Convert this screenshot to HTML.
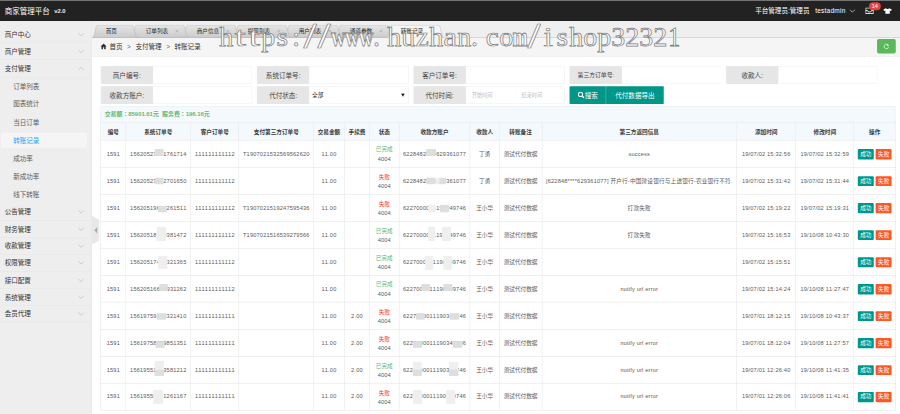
<!DOCTYPE html><html lang="zh-CN"><head><meta charset="utf-8"><title>商家管理平台</title><style>
*{box-sizing:border-box;margin:0;padding:0}
html,body{width:900px;height:414px;overflow:hidden;background:#fff}
body{font-family:"Liberation Sans","Noto Sans CJK SC",sans-serif;color:#333}
#root{position:absolute;left:0;top:0;width:1920px;height:884px;transform:scale(0.46875);transform-origin:0 0;background:#fff;overflow:hidden;font-size:14px}
#hdr{position:absolute;left:0;top:0;width:1920px;height:44.5px;background:#222;border-top:2px solid #7a7a7a}
#hdr .title{position:absolute;left:10px;top:11px;font-size:16px;color:#fff;line-height:22px;white-space:nowrap}
#hdr .ver{position:absolute;left:115.5px;top:13px;font-size:12.5px;font-weight:bold;color:#eee;line-height:18px}
#hdr .user{position:absolute;left:1611px;top:10px;font-size:14px;color:#fff;line-height:22px;white-space:nowrap}
#side{position:absolute;left:0;top:44.5px;width:196px;height:840px;background:#eee;border-right:1px solid #e2e2e2}
#side ul{list-style:none;position:absolute;left:0;top:11.1px;width:195px}
#side li{position:relative;height:36.38px;line-height:37px;padding-left:10px;font-size:14px;color:#333;border-bottom:1px solid #e4e4e4;white-space:nowrap}
#side li.sub{height:38.5px;line-height:39.6px;padding-left:28px;color:#5c5c5c;border-bottom:none}
#side li.sub.on{color:#1E9FFF;background:linear-gradient(#f5f5f5,#f5f5f5) no-repeat 2px 3.2px / 184px 32px}
#side li svg{position:absolute;left:165px;top:13px}
#tabs{position:absolute;left:196px;top:44.5px;width:1724px;height:36.6px;background:#efefef;overflow:hidden}
#crumb{position:absolute;left:196px;top:81.1px;width:1724px;height:39.9px;background:#f5f5f5;border-bottom:1px solid #ececec}
#crumb .t{position:absolute;left:19px;top:7.9px;line-height:22px;font-size:14px;color:#333;white-space:nowrap}
#crumb .t span{margin:0 9.6px;color:#666}
#refresh{position:absolute;left:1871px;top:83px;width:40px;height:31px;background:#5cb85c;border-radius:4px}
.grp{position:absolute;height:38px;width:324px}
.grp .lb{position:absolute;left:0;top:0;width:112.2px;height:38px;background:#e6e6e6;border-radius:2px 0 0 2px;text-align:center;line-height:40px;font-size:14px;color:#444;white-space:nowrap}
.grp .ip{position:absolute;left:112.2px;top:0;width:211.8px;height:38px;border:1px solid #e9e9e9;border-left:none;background:#fff;border-radius:0 2px 2px 0;font-size:12px;line-height:36px;padding-left:10px;color:#333}
.grp .ip.h{width:105.9px;color:#bbb;font-size:11px;padding-left:13px}
.btn{position:absolute;top:183.5px;height:38px;background:#009688;color:#fff;font-size:14px;line-height:38px;text-align:center;white-space:nowrap}
#sum{position:absolute;left:214.3px;top:227.2px;width:1696.1px;height:34.3px;background:#f3f9fd;border:1px solid #e3edf3;border-bottom:none;font-size:12.6px;font-weight:bold;color:#5FB878;line-height:32.5px;padding-left:8px;white-space:nowrap}
table{position:absolute;left:214.3px;top:260.5px;border-collapse:collapse;table-layout:fixed;width:1696.1px;font-size:12px;color:#5a5a5a}
th,td{border:1px solid #e2e2e2;text-align:center;white-space:nowrap;overflow:hidden;padding:0}
th{height:38.5px;background:#f3f9fd;color:#3a3a3a;font-weight:bold;font-size:12px}
td{height:57.58px;line-height:20px}
td.n,.n4{letter-spacing:0.4px;font-kerning:none}
.ok{color:#5FB878}.fail{color:#f33}
.b{display:inline-block;width:34.6px;height:21.4px;line-height:21.4px;position:relative;top:0.6px;color:#fff;font-size:12px;border-radius:2px;vertical-align:middle}
.b1{background:#009688;margin-right:3.5px}.b2{background:#FF5722}
#sum i{font-style:normal;font-family:"Liberation Sans","Noto Sans CJK JP",sans-serif}
.m{position:absolute;background:#dedede}
.w{position:absolute;background:#efefef}
</style></head><body>
<div id="root">
<div id="hdr"><div class="title">商家管理平台</div><div class="ver">v2.0</div>
<div class="user">平台管理员:管理员</div><div class="user" style="left:1739px;letter-spacing:0.45px">testadmin</div>
<svg style="position:absolute;left:1812px;top:16.5px" width="13" height="9" viewBox="0 0 13 9"><path d="M1 1.5 L6.5 7 L12 1.5" fill="none" stroke="#c8c8c8" stroke-width="1.7"/></svg>
<svg style="position:absolute;left:1845.5px;top:14px" width="18" height="14" viewBox="0 0 18 14"><rect x="1" y="1" width="16" height="12" fill="none" stroke="#fff" stroke-width="1.8"/><path d="M1 6.5 L5 6.5 L6.5 9.5 L11.5 9.5 L13 6.5 L17 6.5" fill="none" stroke="#fff" stroke-width="1.8"/></svg>
<div style="position:absolute;left:1854px;top:2.5px;width:24.5px;height:17px;border-radius:8.5px;background:#e5453d;color:#fff;font-size:12px;line-height:17px;text-align:center">14</div>
<svg style="position:absolute;left:1884px;top:14.5px" width="19" height="13" viewBox="0 0 22 15"><path d="M7 0.5 L0.5 3.5 L2.5 7.5 L5.5 6.5 L5.5 14.5 L16.5 14.5 L16.5 6.5 L19.5 7.5 L21.5 3.5 L15 0.5 C14 2.8 8 2.8 7 0.5 Z" fill="#fff"/></svg>
</div>
<div id="side"><ul>
<li>商户中心<svg width="16" height="10" viewBox="0 0 16 10"><path d="M2.5 2 L8 7.5 L13.5 2" fill="none" stroke="#bdbdbd" stroke-width="1.5"/></svg></li>
<li>商户管理<svg width="16" height="10" viewBox="0 0 16 10"><path d="M2.5 2 L8 7.5 L13.5 2" fill="none" stroke="#bdbdbd" stroke-width="1.5"/></svg></li>
<li>支付管理<svg width="16" height="10" viewBox="0 0 16 10"><path d="M2.5 8 L8 2.5 L13.5 8" fill="none" stroke="#bdbdbd" stroke-width="1.5"/></svg></li>
<li class="sub">订单列表</li>
<li class="sub">图表统计</li>
<li class="sub">当日订单</li>
<li class="sub on">转账记录</li>
<li class="sub">成功率</li>
<li class="sub">新成功率</li>
<li class="sub">线下转账</li>
<li>公告管理<svg width="16" height="10" viewBox="0 0 16 10"><path d="M2.5 2 L8 7.5 L13.5 2" fill="none" stroke="#bdbdbd" stroke-width="1.5"/></svg></li>
<li>财务管理<svg width="16" height="10" viewBox="0 0 16 10"><path d="M2.5 2 L8 7.5 L13.5 2" fill="none" stroke="#bdbdbd" stroke-width="1.5"/></svg></li>
<li>收款管理<svg width="16" height="10" viewBox="0 0 16 10"><path d="M2.5 2 L8 7.5 L13.5 2" fill="none" stroke="#bdbdbd" stroke-width="1.5"/></svg></li>
<li>权限管理<svg width="16" height="10" viewBox="0 0 16 10"><path d="M2.5 2 L8 7.5 L13.5 2" fill="none" stroke="#bdbdbd" stroke-width="1.5"/></svg></li>
<li>接口配置<svg width="16" height="10" viewBox="0 0 16 10"><path d="M2.5 2 L8 7.5 L13.5 2" fill="none" stroke="#bdbdbd" stroke-width="1.5"/></svg></li>
<li>系统管理<svg width="16" height="10" viewBox="0 0 16 10"><path d="M2.5 2 L8 7.5 L13.5 2" fill="none" stroke="#bdbdbd" stroke-width="1.5"/></svg></li>
<li>会员代理<svg width="16" height="10" viewBox="0 0 16 10"><path d="M2.5 2 L8 7.5 L13.5 2" fill="none" stroke="#bdbdbd" stroke-width="1.5"/></svg></li>
</ul></div>
<svg style="position:absolute;left:196px;top:460px" width="18" height="62" viewBox="0 0 18 62"><path d="M0 0 L15.5 9 L15.5 53 L0 62 Z" fill="#e6e6e6" fill-opacity="0.92"/><path d="M11.5 24 L5.5 31 L11.5 38 Z" fill="#a8a8a8"/></svg>
<div id="tabs">
<svg style="position:absolute;left:0;top:0" width="1724" height="38" viewBox="0 0 1724 38"><defs><linearGradient id="tg" x1="0" y1="0" x2="0" y2="1"><stop offset="0" stop-color="#e6e6e6"/><stop offset="1" stop-color="#c9c9c9"/></linearGradient></defs><path d="M520.1 36.6 C525.3 36.6 526.4 8.6 531.6 8.6 L630.6 8.6 C635.8 8.6 636.9 36.6 642.1 36.6 Z" fill="url(#tg)" stroke="#b2b2b2" stroke-width="1"/><path d="M531.6 7.5 L630.6 7.5" stroke="#f7f7f7" stroke-width="1.2" fill="none"/><path d="M411.1 36.6 C416.3 36.6 417.4 8.6 422.6 8.6 L521.6 8.6 C526.8 8.6 527.9 36.6 533.1 36.6 Z" fill="url(#tg)" stroke="#b2b2b2" stroke-width="1"/><path d="M422.6 7.5 L521.6 7.5" stroke="#f7f7f7" stroke-width="1.2" fill="none"/><path d="M302.1 36.6 C307.3 36.6 308.4 8.6 313.6 8.6 L412.6 8.6 C417.8 8.6 418.9 36.6 424.1 36.6 Z" fill="url(#tg)" stroke="#b2b2b2" stroke-width="1"/><path d="M313.6 7.5 L412.6 7.5" stroke="#f7f7f7" stroke-width="1.2" fill="none"/><path d="M193.1 36.6 C198.3 36.6 199.4 8.6 204.6 8.6 L303.6 8.6 C308.8 8.6 309.9 36.6 315.1 36.6 Z" fill="url(#tg)" stroke="#b2b2b2" stroke-width="1"/><path d="M204.6 7.5 L303.6 7.5" stroke="#f7f7f7" stroke-width="1.2" fill="none"/><path d="M84.1 36.6 C89.3 36.6 90.4 8.6 95.6 8.6 L194.6 8.6 C199.8 8.6 200.9 36.6 206.1 36.6 Z" fill="url(#tg)" stroke="#b2b2b2" stroke-width="1"/><path d="M95.6 7.5 L194.6 7.5" stroke="#f7f7f7" stroke-width="1.2" fill="none"/><path d="M0.7 36.6 C5.9 36.6 7.0 8.6 12.2 8.6 L85.6 8.6 C90.8 8.6 91.9 36.6 97.1 36.6 Z" fill="url(#tg)" stroke="#b2b2b2" stroke-width="1"/><path d="M12.2 7.5 L85.6 7.5" stroke="#f7f7f7" stroke-width="1.2" fill="none"/><path d="M629.1 36.6 C634.3 36.6 635.4 8.6 640.6 8.6 L739.6 8.6 C744.8 8.6 745.9 36.6 751.1 36.6 Z" fill="#f6f6f6" stroke="#b2b2b2" stroke-width="1"/><path d="M640.6 7.5 L739.6 7.5" stroke="#f7f7f7" stroke-width="1.2" fill="none"/><path d="M0 36.0 L632 36.0 M748 36.0 L1724 36.0" stroke="#b0b0b0" stroke-width="1.5"/></svg>
<div style="position:absolute;left:1.5px;top:12.8px;width:80px;text-align:center;font-size:12px;line-height:20px;color:#222;white-space:nowrap">首页</div><div style="position:absolute;left:98.7px;top:12.8px;width:80px;text-align:center;font-size:12px;line-height:20px;color:#222;white-space:nowrap">订单列表</div><div style="position:absolute;left:175.0px;top:11.8px;width:12px;text-align:center;font-size:13px;line-height:20px;color:#9fb0c0">×</div><div style="position:absolute;left:207.5px;top:12.8px;width:80px;text-align:center;font-size:12px;line-height:20px;color:#222;white-space:nowrap">商户信息</div><div style="position:absolute;left:283.8px;top:11.8px;width:12px;text-align:center;font-size:13px;line-height:20px;color:#9fb0c0">×</div><div style="position:absolute;left:316.3px;top:12.8px;width:80px;text-align:center;font-size:12px;line-height:20px;color:#222;white-space:nowrap">提现列表</div><div style="position:absolute;left:392.6px;top:11.8px;width:12px;text-align:center;font-size:13px;line-height:20px;color:#9fb0c0">×</div><div style="position:absolute;left:425.1px;top:12.8px;width:80px;text-align:center;font-size:12px;line-height:20px;color:#222;white-space:nowrap">用户列表</div><div style="position:absolute;left:501.4px;top:11.8px;width:12px;text-align:center;font-size:13px;line-height:20px;color:#9fb0c0">×</div><div style="position:absolute;left:533.9px;top:12.8px;width:80px;text-align:center;font-size:12px;line-height:20px;color:#222;white-space:nowrap">通道参数</div><div style="position:absolute;left:610.2px;top:11.8px;width:12px;text-align:center;font-size:13px;line-height:20px;color:#9fb0c0">×</div><div style="position:absolute;left:642.7px;top:12.8px;width:80px;text-align:center;font-size:12px;line-height:20px;color:#222;white-space:nowrap">转账记录</div><div style="position:absolute;left:719.0px;top:11.8px;width:12px;text-align:center;font-size:13px;line-height:20px;color:#9fb0c0">×</div>
</div>
<div id="crumb"><svg style="position:absolute;left:17.5px;top:10.9px" width="14" height="14" viewBox="0 0 14 14"><path d="M7 1 L0.5 7 L2.5 7 L2.5 13 L5.8 13 L5.8 9 L8.2 9 L8.2 13 L11.5 13 L11.5 7 L13.5 7 Z" fill="#333"/></svg><div class="t" style="left:37.5px">首页<span>&gt;</span>支付管理<span>&gt;</span>转账记录</div></div>
<div id="refresh"><svg style="position:absolute;left:12px;top:8px" width="16" height="16" viewBox="0 0 16 16"><path d="M12.6 9.2 A4.8 4.8 0 1 1 11.2 4.5" fill="none" stroke="#f4fff4" stroke-width="1.5"/><path d="M10.2 2.6 L14 6.6 L9.6 7 Z" fill="#f4fff4"/></svg></div>
<div class="grp" style="left:214.5px;top:140.5px"><div class="lb">商户编号:</div><div class="ip"></div></div>
<div class="grp" style="left:548.0px;top:140.5px"><div class="lb">系统订单号:</div><div class="ip"></div></div>
<div class="grp" style="left:881.5px;top:140.5px"><div class="lb">客户订单号:</div><div class="ip"></div></div>
<div class="grp" style="left:1215.0px;top:140.5px"><div class="lb" style="font-size:12.4px">第三方订单号:</div><div class="ip"></div></div>
<div class="grp" style="left:1548.5px;top:140.5px"><div class="lb">收款人:</div><div class="ip"></div></div>
<div class="grp" style="left:214.5px;top:183.5px"><div class="lb">收款方账户:</div><div class="ip"></div></div>
<div class="grp" style="left:548.0px;top:183.5px"><div class="lb">代付状态:</div><div class="ip" style="padding-left:5.5px;color:#111">全部<svg style="position:absolute;right:6.5px;top:14px" width="9" height="8" viewBox="0 0 9 8"><path d="M0.3 0.5 L8.7 0.5 L4.5 7.5 Z" fill="#222"/></svg></div></div>
<div class="grp" style="left:881.5px;top:183.5px"><div class="lb">代付时间:</div><div class="ip h">开始时间</div><div class="ip h" style="left:218.1px">结束时间</div></div>
<div class="btn" style="left:1215px;width:78px;border-right:1px solid #33ab9f;border-radius:2px 0 0 2px"><svg style="vertical-align:-2.5px;margin-right:0.5px" width="15.5" height="15.5" viewBox="0 0 14 14"><circle cx="5.8" cy="5.8" r="4" fill="none" stroke="#fff" stroke-width="2"/><path d="M8.8 8.8 L12.8 12.8" stroke="#fff" stroke-width="2.4"/></svg>搜索</div>
<div class="btn" style="left:1293px;width:123px;border-radius:0 2px 2px 0">代付数据导出</div>
<div id="sum">交易额<i lang="ja">：</i>85901.61元&nbsp;&nbsp;服务费<i lang="ja">：</i>196.16元</div>
<table><colgroup><col style="width:53.9px"><col style="width:138.0px"><col style="width:103.2px"><col style="width:159.1px"><col style="width:65.7px"><col style="width:53.8px"><col style="width:62.8px"><col style="width:151.5px"><col style="width:62.4px"><col style="width:90.9px"><col style="width:415.4px"><col style="width:126.2px"><col style="width:123.8px"><col style="width:89.4px"></colgroup>
<tr><th>编号</th><th>系统订单号</th><th>客户订单号</th><th>支付第三方订单号</th><th>交易金额</th><th>手续费</th><th>状态</th><th>收款方账户</th><th>收款人</th><th>转账备注</th><th>第三方返回信息</th><th>添加时间</th><th>修改时间</th><th>操作</th></tr>
<tr><td class="n">1591</td><td class="n">15620527761761714</td><td class="n">111111111112</td><td class="n">T1907021532569562620</td><td class="n">11.00</td><td class="n"></td><td style="padding-top:2.4px"><span class="ok">已完成</span><br><span class="n4">4004</span></td><td class="n">6228482018629361077</td><td>丁勇</td><td>测试代付数据</td><td class="n">success</td><td class="n">19/07/02 15:32:56</td><td class="n">19/07/02 15:32:59</td><td><span class="b b1">成功</span><span class="b b2">失败</span></td></tr>
<tr><td class="n">1591</td><td class="n">15620527012701650</td><td class="n">111111111112</td><td class="n"></td><td class="n">11.00</td><td class="n"></td><td style="padding-top:2.4px"><span class="fail">失败</span><br><span class="n4">4004</span></td><td class="n">6228482018629361077</td><td>丁勇</td><td>测试代付数据</td><td class="n">[622848****629361077] 开户行-中国建设银行与上送银行-农业银行不符.</td><td class="n">19/07/02 15:31:42</td><td class="n">19/07/02 15:31:44</td><td><span class="b b1">成功</span><span class="b b2">失败</span></td></tr>
<tr><td class="n">1591</td><td class="n">15620519622261511</td><td class="n">111111111112</td><td class="n">T1907021519247595436</td><td class="n">11.00</td><td class="n"></td><td style="padding-top:2.4px"><span class="fail">失败</span><br><span class="n4">4004</span></td><td class="n">6227000011190349746</td><td>王小华</td><td>测试代付数据</td><td class="n">打款失败</td><td class="n">19/07/02 15:19:22</td><td class="n">19/07/02 15:19:31</td><td><span class="b b1">成功</span><span class="b b2">失败</span></td></tr>
<tr><td class="n">1591</td><td class="n">15620518130381472</td><td class="n">111111111112</td><td class="n">T1907021516539279566</td><td class="n">11.00</td><td class="n"></td><td style="padding-top:2.4px"><span class="ok">已完成</span><br><span class="n4">4004</span></td><td class="n">6227000011190349746</td><td>王小华</td><td>测试代付数据</td><td class="n">打款失败</td><td class="n">19/07/02 15:16:53</td><td class="n">19/10/08 10:43:30</td><td><span class="b b1">成功</span><span class="b b2">失败</span></td></tr>
<tr><td class="n">1591</td><td class="n">15620517455321365</td><td class="n">111111111112</td><td class="n"></td><td class="n">11.00</td><td class="n"></td><td style="padding-top:2.4px"><span class="ok">已完成</span><br><span class="n4">4004</span></td><td class="n">6227000011190349746</td><td>王小华</td><td>测试代付数据</td><td class="n"></td><td class="n">19/07/02 15:15:51</td><td class="n"></td><td><span class="b b1">成功</span><span class="b b2">失败</span></td></tr>
<tr><td class="n">1591</td><td class="n">15620516648931262</td><td class="n">111111111112</td><td class="n"></td><td class="n">11.00</td><td class="n"></td><td style="padding-top:2.4px"><span class="ok">已完成</span><br><span class="n4">4004</span></td><td class="n">6227000011190349746</td><td>王小华</td><td>测试代付数据</td><td class="n">notify url error</td><td class="n">19/07/02 15:14:24</td><td class="n">19/10/08 11:27:47</td><td><span class="b b1">成功</span><span class="b b2">失败</span></td></tr>
<tr><td class="n">1591</td><td class="n">15619759353321410</td><td class="n">111111111111</td><td class="n"></td><td class="n">11.00</td><td class="n">2.00</td><td style="padding-top:2.4px"><span class="fail">失败</span><br><span class="n4">4004</span></td><td class="n">6227000011190349746</td><td>王小华</td><td>测试代付数据</td><td class="n"></td><td class="n">19/07/01 18:12:15</td><td class="n">19/10/08 10:43:37</td><td><span class="b b1">成功</span><span class="b b2">失败</span></td></tr>
<tr><td class="n">1591</td><td class="n">15619758389851351</td><td class="n">111111111111</td><td class="n"></td><td class="n">11.00</td><td class="n">2.00</td><td style="padding-top:2.4px"><span class="fail">失败</span><br><span class="n4">4004</span></td><td class="n">6227000011190349746</td><td>王小华</td><td>测试代付数据</td><td class="n">notify url error</td><td class="n">19/07/01 18:12:04</td><td class="n">19/10/08 11:27:57</td><td><span class="b b1">成功</span><span class="b b2">失败</span></td></tr>
<tr><td class="n">1591</td><td class="n">15619551203581212</td><td class="n">111111111111</td><td class="n"></td><td class="n">11.00</td><td class="n">2.00</td><td style="padding-top:2.4px"><span class="ok">已完成</span><br><span class="n4">4004</span></td><td class="n">6227000011190349746</td><td>王小华</td><td>测试代付数据</td><td class="n">notify url error</td><td class="n">19/07/01 12:26:40</td><td class="n">19/10/08 11:41:35</td><td><span class="b b1">成功</span><span class="b b2">失败</span></td></tr>
<tr><td class="n">1591</td><td class="n">15619550071261167</td><td class="n">111111111111</td><td class="n"></td><td class="n">11.00</td><td class="n">2.00</td><td style="padding-top:2.4px"><span class="fail">失败</span><br><span class="n4">4004</span></td><td class="n">6227000011190349746</td><td>王小华</td><td>测试代付数据</td><td class="n">notify url error</td><td class="n">19/07/01 12:26:06</td><td class="n">19/10/08 11:41:41</td><td><span class="b b1">成功</span><span class="b b2">失败</span></td></tr>
</table>
<div class="m" style="left:329.8px;top:317.9px;width:18.8px;height:14.9px"></div>
<div class="m" style="left:330.7px;top:378.5px;width:17.9px;height:14.9px"></div>
<div class="m" style="left:337.1px;top:438.6px;width:19.2px;height:14.5px"></div>
<div class="w" style="left:334.1px;top:484.3px;width:20.1px;height:29.9px"></div>
<div class="w" style="left:337.1px;top:546.1px;width:20.1px;height:27.7px"></div>
<div class="m" style="left:340.1px;top:605.9px;width:18.3px;height:14.9px"></div>
<div class="m" style="left:334.9px;top:667.7px;width:19.2px;height:14.1px"></div>
<div class="m" style="left:331.5px;top:727.5px;width:19.6px;height:14.1px"></div>
<div class="w" style="left:329.8px;top:770.1px;width:20.1px;height:19.2px"></div>
<div class="m" style="left:329.8px;top:788.5px;width:20.1px;height:13.7px"></div>
<div class="w" style="left:327.3px;top:832.0px;width:20.5px;height:29.9px"></div>
<div class="m" style="left:908.8px;top:317.9px;width:21.3px;height:14.9px"></div>
<div class="m" style="left:908.8px;top:378.5px;width:20.1px;height:14.9px"></div>
<div class="m" style="left:937.4px;top:378.5px;width:14.1px;height:14.9px"></div>
<div class="w" style="left:928.9px;top:378.5px;width:8.5px;height:14.9px"></div>
<div class="w" style="left:913.1px;top:437.3px;width:15.8px;height:15.8px"></div>
<div class="m" style="left:938.7px;top:437.3px;width:19.2px;height:15.8px"></div>
<div class="w" style="left:913.1px;top:484.3px;width:14.9px;height:29.9px"></div>
<div class="w" style="left:942.9px;top:484.3px;width:19.2px;height:29.9px"></div>
<div class="w" style="left:906.7px;top:546.1px;width:17.1px;height:29.9px"></div>
<div class="w" style="left:945.9px;top:546.1px;width:18.3px;height:29.9px"></div>
<div class="m" style="left:899.0px;top:605.9px;width:18.3px;height:14.9px"></div>
<div class="m" style="left:945.9px;top:605.9px;width:19.2px;height:14.9px"></div>
<div class="m" style="left:887.5px;top:667.7px;width:18.3px;height:14.1px"></div>
<div class="m" style="left:960.0px;top:667.7px;width:19.2px;height:14.1px"></div>
<div class="m" style="left:881.1px;top:727.5px;width:19.2px;height:14.1px"></div>
<div class="m" style="left:965.5px;top:727.5px;width:20.1px;height:14.1px"></div>
<div class="w" style="left:881.1px;top:772.3px;width:19.2px;height:17.1px"></div>
<div class="m" style="left:881.1px;top:788.5px;width:19.2px;height:13.7px"></div>
<div class="w" style="left:957.9px;top:772.3px;width:20.5px;height:17.1px"></div>
<div class="m" style="left:957.9px;top:788.5px;width:20.5px;height:13.7px"></div>
<div class="w" style="left:881.1px;top:832.0px;width:19.2px;height:29.9px"></div>
<div class="w" style="left:951.5px;top:832.0px;width:19.2px;height:29.9px"></div>
</div>
<svg style="position:absolute;left:0;top:0" width="900" height="70" viewBox="0 0 900 70"><g font-family="Liberation Serif, serif" font-size="28" fill="#fff" stroke="#7d7d7d" stroke-width="0.75"><text transform="translate(226.20,46.0) scale(1.000,1.00)" text-anchor="middle" vector-effect="non-scaling-stroke">h</text><text transform="translate(240.20,46.0) scale(1.477,1.00)" text-anchor="middle" vector-effect="non-scaling-stroke">t</text><text transform="translate(254.20,46.0) scale(1.477,1.00)" text-anchor="middle" vector-effect="non-scaling-stroke">t</text><text transform="translate(268.20,46.0) scale(1.000,1.00)" text-anchor="middle" vector-effect="non-scaling-stroke">p</text><text transform="translate(282.20,46.0) scale(1.056,1.00)" text-anchor="middle" vector-effect="non-scaling-stroke">s</text><text transform="translate(296.20,46.0) scale(1.002,1.00)" text-anchor="middle" vector-effect="non-scaling-stroke">:</text><text transform="translate(310.20,47.7) scale(1.567,1.25)" text-anchor="middle" vector-effect="non-scaling-stroke" font-weight="bold">/</text><text transform="translate(324.20,47.7) scale(1.567,1.25)" text-anchor="middle" vector-effect="non-scaling-stroke" font-weight="bold">/</text><text transform="translate(338.20,46.0) scale(0.712,1.00)" text-anchor="middle" vector-effect="non-scaling-stroke" font-weight="bold">w</text><text transform="translate(352.20,46.0) scale(0.712,1.00)" text-anchor="middle" vector-effect="non-scaling-stroke" font-weight="bold">w</text><text transform="translate(366.20,46.0) scale(0.712,1.00)" text-anchor="middle" vector-effect="non-scaling-stroke" font-weight="bold">w</text><text transform="translate(376.40,46.0) scale(1.000,1.00)" text-anchor="middle" vector-effect="non-scaling-stroke">.</text><text transform="translate(394.20,46.0) scale(1.000,1.00)" text-anchor="middle" vector-effect="non-scaling-stroke">h</text><text transform="translate(408.20,46.0) scale(1.000,1.00)" text-anchor="middle" vector-effect="non-scaling-stroke">u</text><text transform="translate(422.20,46.0) scale(1.046,1.00)" text-anchor="middle" vector-effect="non-scaling-stroke">z</text><text transform="translate(436.20,46.0) scale(1.000,1.00)" text-anchor="middle" vector-effect="non-scaling-stroke">h</text><text transform="translate(450.20,46.0) scale(1.086,1.00)" text-anchor="middle" vector-effect="non-scaling-stroke">a</text><text transform="translate(464.20,46.0) scale(1.000,1.00)" text-anchor="middle" vector-effect="non-scaling-stroke">n</text><text transform="translate(474.40,46.0) scale(1.000,1.00)" text-anchor="middle" vector-effect="non-scaling-stroke">.</text><text transform="translate(492.20,46.0) scale(1.046,1.00)" text-anchor="middle" vector-effect="non-scaling-stroke">c</text><text transform="translate(506.20,46.0) scale(1.000,1.00)" text-anchor="middle" vector-effect="non-scaling-stroke">o</text><text transform="translate(520.20,46.0) scale(0.652,1.00)" text-anchor="middle" vector-effect="non-scaling-stroke" font-weight="bold">m</text><text transform="translate(534.20,47.7) scale(1.567,1.25)" text-anchor="middle" vector-effect="non-scaling-stroke" font-weight="bold">/</text><text transform="translate(548.20,46.0) scale(1.220,1.00)" text-anchor="middle" vector-effect="non-scaling-stroke">i</text><text transform="translate(562.20,46.0) scale(1.056,1.00)" text-anchor="middle" vector-effect="non-scaling-stroke">s</text><text transform="translate(576.20,46.0) scale(1.000,1.00)" text-anchor="middle" vector-effect="non-scaling-stroke">h</text><text transform="translate(590.20,46.0) scale(1.000,1.00)" text-anchor="middle" vector-effect="non-scaling-stroke">o</text><text transform="translate(604.20,46.0) scale(1.000,1.00)" text-anchor="middle" vector-effect="non-scaling-stroke">p</text><text transform="translate(618.20,46.0) scale(1.000,1.00)" text-anchor="middle" vector-effect="non-scaling-stroke">3</text><text transform="translate(632.20,46.0) scale(1.000,1.00)" text-anchor="middle" vector-effect="non-scaling-stroke">2</text><text transform="translate(646.20,46.0) scale(1.000,1.00)" text-anchor="middle" vector-effect="non-scaling-stroke">3</text><text transform="translate(660.20,46.0) scale(1.000,1.00)" text-anchor="middle" vector-effect="non-scaling-stroke">2</text><text transform="translate(674.20,46.0) scale(0.857,1.00)" text-anchor="middle" vector-effect="non-scaling-stroke">1</text></g></svg>
</body></html>
